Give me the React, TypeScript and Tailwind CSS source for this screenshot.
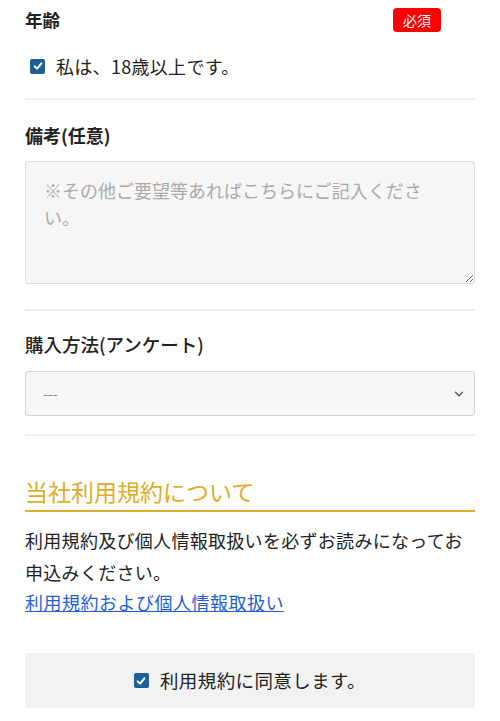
import { ChevronDown } from 'lucide-react'

function CheckBox() {
  return (
    <span className="inline-flex h-[15px] w-[15px] shrink-0 items-center justify-center rounded-[2px] bg-[#1f6197]">
      <svg viewBox="0 0 16 16" className="h-[12px] w-[12px]" fill="none" stroke="white" strokeWidth="2.6" strokeLinecap="round" strokeLinejoin="round">
        <path d="M3.5 8.5 L6.8 11.5 L12.5 4.5" />
      </svg>
    </span>
  )
}

export default function App() {
  return (
    <div
      className="min-h-[721px] bg-white px-[25px] text-[#222]"
      style={{ fontFamily: '"Noto Sans CJK JP", "Noto Sans", sans-serif' }}
    >
      {/* 年齢 */}
      <section className="border-b-2 border-[#eeeeee] pb-[19px] pt-[7px]">
        <div className="flex items-center justify-between">
          <h3 className="text-[17.5px] font-bold leading-[26px]">年齢</h3>
          <span className="mr-[34px] rounded-[4px] bg-[#ff0000] px-[10px] text-[14px] leading-[24px] text-white">必須</span>
        </div>
        <label className="mt-[20px] flex items-center gap-[11px] pl-[5px] text-[18px] leading-[26px] tracking-[0.3px]">
          <CheckBox />
          <span>私は、18歳以上です。</span>
        </label>
      </section>

      {/* 備考 */}
      <section className="border-b-2 border-[#eeeeee] pb-[25px] pt-[22px]">
        <h3 className="text-[18px] font-bold leading-[26px]">備考(任意)</h3>
        <textarea
          className="mt-[13px] block h-[123px] w-full resize-y rounded-[3px] border border-[#dddddd] bg-[#f6f6f6] px-[18px] py-[15px] text-[18px] leading-[27px] placeholder:text-[#aaaaaa]"
          placeholder="※その他ご要望等あればこちらにご記入ください。"
        />
      </section>

      {/* 購入方法 */}
      <section className="border-b-2 border-[#eeeeee] pb-[18px] pt-[20px]">
        <h3 className="text-[18.5px] font-medium leading-[26px]">購入方法(アンケート)</h3>
        <div className="relative mt-[14px] flex h-[45px] items-center rounded-[3px] border border-[#d4d4d4] bg-[#f6f6f6] px-[17px]">
          <span className="text-[14px] text-[#888]">---</span>
          <ChevronDown className="absolute right-[8px] top-[15px] h-[14px] w-[14px] text-[#555]" strokeWidth={2.2} />
        </div>
      </section>

      {/* 当社利用規約について */}
      <section className="pt-[39px]">
        <h2 className="border-b-2 border-[#e0b12b] pb-[3px] text-[23px] leading-[32px] text-[#e0ac26]">当社利用規約について</h2>
        <p className="mt-[12px] text-[18px] leading-[32px] tracking-[0.3px]">
          利用規約及び個人情報取扱いを必ずお読みになってお申込みください。
        </p>
        <a href="#" className="block text-[18px] leading-[28px] tracking-[0.5px] text-[#1f5fd6] underline">
          利用規約および個人情報取扱い
        </a>
        <label className="mt-[37px] flex h-[55px] items-center justify-center gap-[11px] bg-[#f2f2f2] text-[18.5px] tracking-[0.4px]">
          <CheckBox />
          <span>利用規約に同意します。</span>
        </label>
      </section>
    </div>
  )
}
